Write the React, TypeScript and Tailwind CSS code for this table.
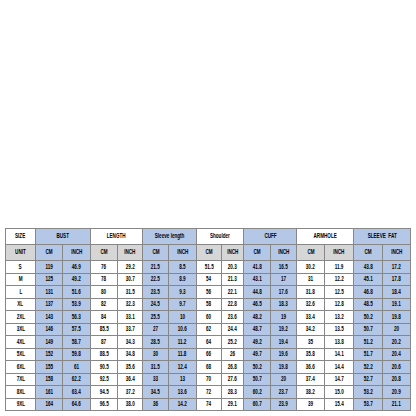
const groups = [
  { name: "SIZE", blue: false, span: 1 },
  { name: "BUST", blue: true, span: 2 },
  { name: "LENGTH", blue: false, span: 2 },
  { name: "Sleeve length", blue: true, span: 2 },
  { name: "Shoulder", blue: false, span: 2 },
  { name: "CUFF", blue: true, span: 2 },
  { name: "ARMHOLE", blue: false, span: 2 },
  { name: "SLEEVE  FAT", blue: true, span: 2 },
];

const widths = [30, 27, 28, 27, 25, 26, 28, 25, 22, 27, 26, 28, 29, 29, 28];

const rows: string[][] = [
  ["S", "119", "46.9", "76", "29.2", "21.5", "8.5", "51.5", "20.3", "41.8", "16.5", "30.2", "11.9", "43.8", "17.2"],
  ["M", "125", "49.2", "78", "30.7", "22.5", "8.9", "54", "21.3", "43.1", "17", "31", "12.2", "45.1", "17.8"],
  ["L", "131", "51.6", "80", "31.5", "23.5", "9.3", "56", "22.1", "44.8", "17.6", "31.8", "12.5", "46.8", "18.4"],
  ["XL", "137", "53.9", "82", "32.3", "24.5", "9.7", "58", "22.8", "46.5", "18.3", "32.6", "12.8", "48.5", "19.1"],
  ["2XL", "143", "56.3", "84", "33.1", "25.5", "10", "60", "23.6", "48.2", "19", "33.4", "13.2", "50.2", "19.8"],
  ["3XL", "146", "57.5", "85.5", "33.7", "27", "10.6", "62", "24.4", "48.7", "19.2", "34.2", "13.5", "50.7", "20"],
  ["4XL", "149", "58.7", "87", "34.3", "28.5", "11.2", "64", "25.2", "49.2", "19.4", "35", "13.8", "51.2", "20.2"],
  ["5XL", "152", "59.8", "88.5", "34.8", "30", "11.8", "66", "26", "49.7", "19.6", "35.8", "14.1", "51.7", "20.4"],
  ["6XL", "155", "61", "90.5", "35.6", "31.5", "12.4", "68", "26.8", "50.2", "19.8", "36.6", "14.4", "52.2", "20.6"],
  ["7XL", "158", "62.2", "92.5", "36.4", "33", "13", "70", "27.6", "50.7", "20", "37.4", "14.7", "52.7", "20.8"],
  ["8XL", "161", "63.4", "94.5", "37.2", "34.5", "13.6", "72", "28.3", "60.2", "23.7", "38.2", "15.0", "53.2", "20.9"],
  ["9XL", "164", "64.6", "96.5", "38.0", "36", "14.2", "74", "29.1", "60.7", "23.9", "39", "15.4", "53.7", "21.1"],
];

// columns that sit under a blue heading
const isBlue = (i: number) => [1, 2, 5, 6, 9, 10, 13, 14].includes(i);

const cell = "border border-[#878787] text-center align-middle p-0 leading-none whitespace-pre";

const Txt = ({ children }: { children: string }) => (
  <span className="inline-block scale-x-[0.72]">{children}</span>
);

export default function App() {
  return (
    <div
      className="w-[416px] h-[416px] bg-white pt-[228px] pl-[5px] overflow-hidden"
      style={{ fontFamily: '"Liberation Sans", Arial, sans-serif' }}
    >
      <table className="table-fixed border-collapse w-[405px] text-[6.4px] font-bold text-black">
        <colgroup>
          {widths.map((w, i) => (
            <col key={i} style={{ width: w }} />
          ))}
        </colgroup>
        <tbody>
          <tr className="h-[16px]">
            {groups.map((g) => (
              <td
                key={g.name}
                colSpan={g.span}
                className={`${cell} ${g.blue ? "bg-[#b4c7e7]" : "bg-white"}`}
              >
                <Txt>{g.name}</Txt>
              </td>
            ))}
          </tr>
          <tr className="h-[16px]">
            {widths.map((_, i) => (
              <td key={i} className={`${cell} ${isBlue(i) ? "bg-[#b4c7e7]" : "bg-[#d6d6d6]"}`}>
                <Txt>{i === 0 ? "UNIT" : i % 2 === 1 ? "CM" : "INCH"}</Txt>
              </td>
            ))}
          </tr>
          {rows.map((r) => (
            <tr key={r[0]} className="h-[12.5px]">
              {r.map((v, i) => (
                <td key={i} className={`${cell} ${isBlue(i) ? "bg-[#b4c7e7]" : "bg-white"}`}>
                  <Txt>{v}</Txt>
                </td>
              ))}
            </tr>
          ))}
        </tbody>
      </table>
    </div>
  );
}
